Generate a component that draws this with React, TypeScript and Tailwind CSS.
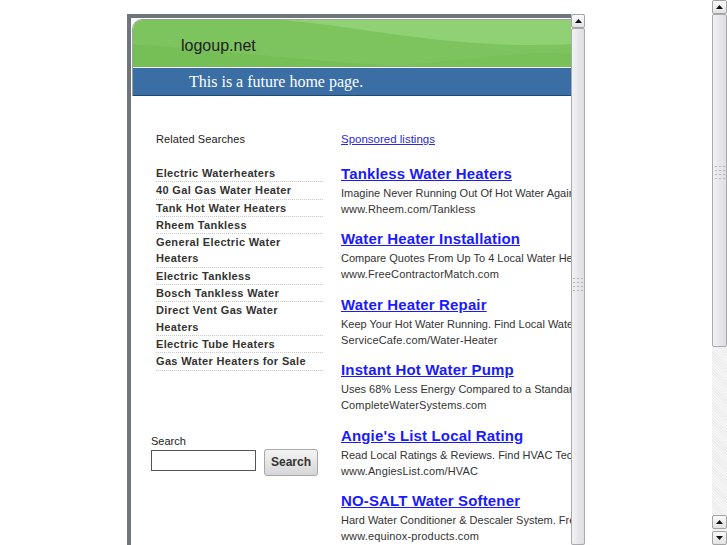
const related = [
  'Electric Waterheaters',
  '40 Gal Gas Water Heater',
  'Tank Hot Water Heaters',
  'Rheem Tankless',
  'General Electric Water Heaters',
  'Electric Tankless',
  'Bosch Tankless Water',
  'Direct Vent Gas Water Heaters',
  'Electric Tube Heaters',
  'Gas Water Heaters for Sale',
];

const ads = [
  {
    title: 'Tankless Water Heaters',
    desc: 'Imagine Never Running Out Of Hot Water Again. Learn More Today.',
    url: 'www.Rheem.com/Tankless',
  },
  {
    title: 'Water Heater Installation',
    desc: 'Compare Quotes From Up To 4 Local Water Heater Pros Now.',
    url: 'www.FreeContractorMatch.com',
  },
  {
    title: 'Water Heater Repair',
    desc: 'Keep Your Hot Water Running. Find Local Water Heater Pros.',
    url: 'ServiceCafe.com/Water-Heater',
  },
  {
    title: 'Instant Hot Water Pump',
    desc: 'Uses 68% Less Energy Compared to a Standard Pump.',
    url: 'CompleteWaterSystems.com',
  },
  {
    title: "Angie's List Local Rating",
    desc: 'Read Local Ratings & Reviews. Find HVAC Techs Near You.',
    url: 'www.AngiesList.com/HVAC',
  },
  {
    title: 'NO-SALT Water Softener',
    desc: 'Hard Water Conditioner & Descaler System. Free Shipping.',
    url: 'www.equinox-products.com',
  },
];

const Arrow = ({ down = false }: { down?: boolean }) => (
  <div className="flex h-[14px] w-full shrink-0 items-center justify-center rounded-[2px] border border-[#a3a3a3] bg-[linear-gradient(#fbfbfb,#e2e2e6)]">
    <svg width="7" height="4" viewBox="0 0 7 4">
      {down ? <path d="M0 0h7L3.5 4z" fill="#111" /> : <path d="M0 4h7L3.5 0z" fill="#111" />}
    </svg>
  </div>
);

const Grip = () => (
  <div className="grid grid-cols-3 gap-x-[2px] gap-y-[3px]">
    {Array.from({ length: 12 }).map((_, i) => (
      <div key={i} className="h-px w-[2px] bg-[#b4b4bc]" />
    ))}
  </div>
);

const App = () => {
  return (
    <div className="flex h-[545px] w-[727px] overflow-hidden bg-white font-['Liberation_Sans',Arial,sans-serif]">
      <div className="flex-1 pl-[127px] pt-[14px]">
        <div className="flex h-[531px] w-[458px]">
          <div className="flex w-[444px] flex-col overflow-hidden border-l-4 border-t-4 border-[#6e767a] pl-px pt-px">
            <div className="shrink-0 overflow-hidden rounded-tl-[10px] border-l border-t border-[#9ba3a3]">
              <div className="relative h-[47px] bg-[#7dc45f]">
                <svg className="absolute inset-0" width="440" height="47" viewBox="0 0 440 47" preserveAspectRatio="none">
                  <path d="M150 0C240 8 320 30 440 24V0Z" fill="#8fd174" />
                  <path d="M0 24C90 30 190 44 300 47H0Z" fill="#76bf57" />
                  <path d="M250 47C330 40 390 30 440 34V47Z" fill="#78c159" />
                </svg>
                <div className="relative pl-[48px] pt-[17px] text-[16px] leading-[18px] text-[#1e1e1e]">
                  logoup.net
                </div>
              </div>
              <div className="h-px bg-white" />
              <div className="h-[28px] border-b border-[#1f4670] bg-[#3a6ea4] pl-[56px] font-['Liberation_Serif',serif] text-[16px] leading-[27px] text-white">
                This is a future home page.
              </div>
            </div>

            <div className="flex shrink-0 pl-[24px] pt-[36px]">
              <div className="w-[167px] shrink-0">
                <div className="text-[11px] leading-[14px] tracking-[0.1px] text-[#222]">Related Searches</div>
                <ul className="mt-[19px]">
                  {related.map((r) => (
                    <li
                      key={r}
                      className="border-b border-dotted border-[#c8c8c8] text-[11px] font-bold leading-[16.3px] tracking-[0.35px] text-[#333]"
                    >
                      {r}
                    </li>
                  ))}
                </ul>
                <div className="-ml-[5px] mt-[63px]">
                  <div className="text-[11px] leading-[14px] text-[#222]">Search</div>
                  <div className="mt-px flex items-start gap-[8px]">
                    <input className="mt-px h-[21px] w-[105px] border border-[#555] bg-white" />
                    <button className="h-[27px] w-[54px] rounded-[3px] border border-[#a8a8a8] bg-[linear-gradient(#f4f4f4,#d6d6d8)] text-[12px] font-bold text-[#333]">
                      Search
                    </button>
                  </div>
                </div>
              </div>

              <div className="ml-[18px] min-w-0 flex-1">
                <a href="#" className="block text-[11.5px] leading-[14px] text-[#2a2ad6] underline">
                  Sponsored listings
                </a>
                <div className="mt-[19px]">
                  {ads.map((ad) => (
                    <div key={ad.title} className="mb-[13.4px] whitespace-nowrap">
                      <a href="#" className="block text-[15px] font-bold leading-[18px] tracking-[0.15px] text-[#1a1aff] underline">
                        {ad.title}
                      </a>
                      <div className="mt-[2px] text-[11px] leading-[16px] text-[#333]">{ad.desc}</div>
                      <div className="text-[11px] leading-[16px] tracking-[0.15px] text-[#333]">{ad.url}</div>
                    </div>
                  ))}
                </div>
              </div>
            </div>
          </div>

          <div className="flex w-[14px] flex-col bg-[#e9e9ec]">
            <Arrow />
            <div className="flex flex-1 flex-col items-center rounded-[2px] border border-[#a8a8ae] bg-[linear-gradient(90deg,#f2f2f4,#dedee3)] pt-[249px]">
              <Grip />
            </div>
          </div>
        </div>
      </div>

      <div className="flex w-[15px] flex-col bg-[#f3f3f3]">
        <Arrow />
        <div className="flex h-[333px] shrink-0 flex-col items-center rounded-[2px] border border-[#a8a8ae] bg-[linear-gradient(90deg,#f2f2f4,#dedee3)] pt-[151px]">
          <Grip />
        </div>
        <div className="flex-1 bg-[repeating-linear-gradient(45deg,#f6f6f6_0px,#f6f6f6_1px,#ededed_1px,#ededed_2px)]" />
        <Arrow />
        <div className="h-[2px]" />
        <Arrow down />
      </div>
    </div>
  );
};

export default App;
